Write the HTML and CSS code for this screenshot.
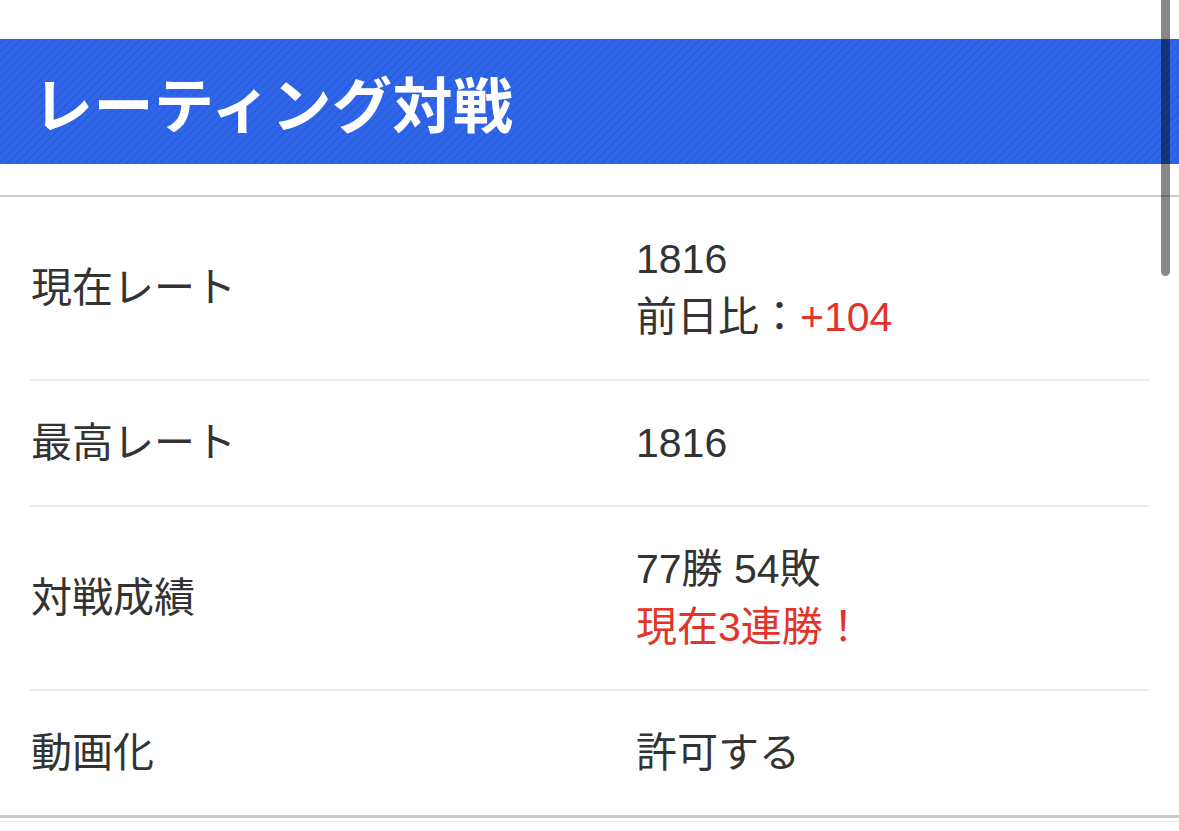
FILE: index.html
```html
<!DOCTYPE html>
<html lang="ja">
<head>
<meta charset="utf-8">
<link rel="stylesheet" href="styles.css">
</head>
<body>
<div class="page">
  <div class="top"></div>
  <h1 class="banner">レーティング対戦</h1>
  <div class="gap"></div>
  <section class="stats">
    <div class="table">
      <div class="row">
        <div class="label">現在レート</div>
        <div class="value">
          <div>1816</div>
          <div>前日比：<span class="red">+104</span></div>
        </div>
      </div>
      <div class="row">
        <div class="label">最高レート</div>
        <div class="value"><div>1816</div></div>
      </div>
      <div class="row">
        <div class="label">対戦成績</div>
        <div class="value">
          <div>77勝 54敗</div>
          <div class="red">現在3連勝！</div>
        </div>
      </div>
      <div class="row">
        <div class="label">動画化</div>
        <div class="value"><div>許可する</div></div>
      </div>
    </div>
  </section>
  <div class="after"></div>
</div>
<div class="scrollbar"></div>
</body>
</html>
```

FILE: styles.css
```css
html, body {
  margin: 0;
  padding: 0;
  background: #ffffff;
}

body {
  font-family: "Liberation Sans", "Noto Sans CJK JP", sans-serif;
  color: #333333;
  overflow: hidden;
}

.page {
  width: 1179px;
}

.top {
  height: 39px;
}

.banner {
  margin: 0;
  height: 125px;
  box-sizing: border-box;
  padding-left: 33px;
  display: flex;
  align-items: center;
  font-family: "Noto Sans CJK JP", sans-serif;
  font-weight: 700;
  font-size: 60px;
  letter-spacing: 0.5px;
  color: #ffffff;
  background-color: #2f65e8;
  background-image: repeating-linear-gradient(
    -45deg,
    rgba(20, 50, 140, 0.16) 0px,
    rgba(20, 50, 140, 0.16) 1.5px,
    rgba(0, 0, 0, 0) 1.5px,
    rgba(0, 0, 0, 0) 6px
  );
}

.gap {
  height: 31px;
  border-bottom: 2px solid #cbcbcb;
}

.stats {
  border-bottom: 3px solid #cccccc;
}

.table {
  margin: 0 30px;
}

.row {
  display: grid;
  grid-template-columns: 606px 1fr;
  align-items: center;
  padding: 33px 0;
  font-size: 41px;
  line-height: 58px;
}

.row + .row {
  border-top: 2px solid #ececec;
}

.label {
  padding-left: 1px;
}

.colon {
  margin-right: 4px;
}

.red {
  color: #e2342a;
}

.after {
  height: 3px;
  border-bottom: 1px solid #f2f2f2;
}

.scrollbar {
  position: fixed;
  top: -10px;
  left: 1161px;
  width: 9px;
  height: 286px;
  border-radius: 5px;
  background: rgba(0, 0, 0, 0.47);
}
```
